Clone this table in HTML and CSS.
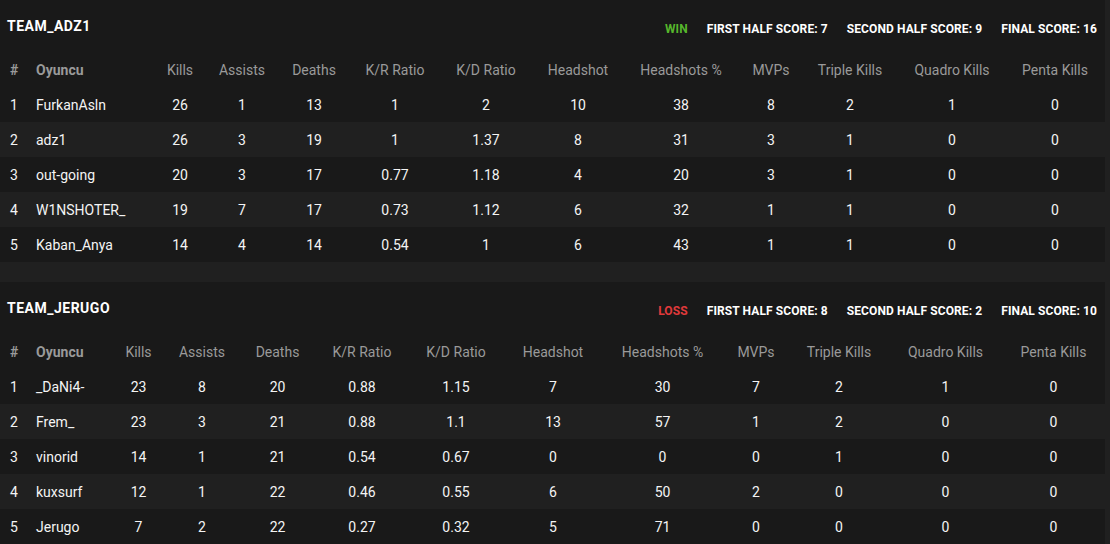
FILE: index.html
```html
<!DOCTYPE html>
<html lang="tr">
<head>
<meta charset="utf-8">
<title>Match Scoreboard</title>
<link rel="stylesheet" href="styles.css">
</head>
<body>
<main class="page">
  <section class="team team-a">
    <header class="team-head">
      <h2 class="team-name">TEAM_ADZ1</h2>
      <ul class="scores">
        <li class="result win">WIN</li>
        <li>FIRST HALF SCORE: 7</li>
        <li>SECOND HALF SCORE: 9</li>
        <li>FINAL SCORE: 16</li>
      </ul>
    </header>
    <table class="stats">
      <colgroup>
        <col class="c-idx"><col class="c-name"><col class="c-kills"><col class="c-assists"><col class="c-deaths"><col class="c-kr"><col class="c-kd"><col class="c-hs"><col class="c-hsp"><col class="c-mvp"><col class="c-triple"><col class="c-quadro"><col class="c-penta">
      </colgroup>
      <thead>
        <tr><th class="idx">#</th><th class="name">Oyuncu</th><th>Kills</th><th>Assists</th><th>Deaths</th><th>K/R Ratio</th><th>K/D Ratio</th><th>Headshot</th><th>Headshots %</th><th>MVPs</th><th>Triple Kills</th><th>Quadro Kills</th><th>Penta Kills</th></tr>
      </thead>
      <tbody>
        <tr><td class="idx">1</td><td class="name">FurkanAsln</td><td>26</td><td>1</td><td>13</td><td>1</td><td>2</td><td>10</td><td>38</td><td>8</td><td>2</td><td>1</td><td>0</td></tr>
        <tr><td class="idx">2</td><td class="name">adz1</td><td>26</td><td>3</td><td>19</td><td>1</td><td>1.37</td><td>8</td><td>31</td><td>3</td><td>1</td><td>0</td><td>0</td></tr>
        <tr><td class="idx">3</td><td class="name">out-going</td><td>20</td><td>3</td><td>17</td><td>0.77</td><td>1.18</td><td>4</td><td>20</td><td>3</td><td>1</td><td>0</td><td>0</td></tr>
        <tr><td class="idx">4</td><td class="name">W1NSHOTER_</td><td>19</td><td>7</td><td>17</td><td>0.73</td><td>1.12</td><td>6</td><td>32</td><td>1</td><td>1</td><td>0</td><td>0</td></tr>
        <tr><td class="idx">5</td><td class="name">Kaban_Anya</td><td>14</td><td>4</td><td>14</td><td>0.54</td><td>1</td><td>6</td><td>43</td><td>1</td><td>1</td><td>0</td><td>0</td></tr>
      </tbody>
    </table>
  </section>

  <section class="team team-b">
    <header class="team-head">
      <h2 class="team-name">TEAM_JERUGO</h2>
      <ul class="scores">
        <li class="result loss">LOSS</li>
        <li>FIRST HALF SCORE: 8</li>
        <li>SECOND HALF SCORE: 2</li>
        <li>FINAL SCORE: 10</li>
      </ul>
    </header>
    <table class="stats">
      <colgroup>
        <col class="c-idx"><col class="c-name"><col class="c-kills"><col class="c-assists"><col class="c-deaths"><col class="c-kr"><col class="c-kd"><col class="c-hs"><col class="c-hsp"><col class="c-mvp"><col class="c-triple"><col class="c-quadro"><col class="c-penta">
      </colgroup>
      <thead>
        <tr><th class="idx">#</th><th class="name">Oyuncu</th><th>Kills</th><th>Assists</th><th>Deaths</th><th>K/R Ratio</th><th>K/D Ratio</th><th>Headshot</th><th>Headshots %</th><th>MVPs</th><th>Triple Kills</th><th>Quadro Kills</th><th>Penta Kills</th></tr>
      </thead>
      <tbody>
        <tr><td class="idx">1</td><td class="name">_DaNi4-</td><td>23</td><td>8</td><td>20</td><td>0.88</td><td>1.15</td><td>7</td><td>30</td><td>7</td><td>2</td><td>1</td><td>0</td></tr>
        <tr><td class="idx">2</td><td class="name">Frem_</td><td>23</td><td>3</td><td>21</td><td>0.88</td><td>1.1</td><td>13</td><td>57</td><td>1</td><td>2</td><td>0</td><td>0</td></tr>
        <tr><td class="idx">3</td><td class="name">vinorid</td><td>14</td><td>1</td><td>21</td><td>0.54</td><td>0.67</td><td>0</td><td>0</td><td>0</td><td>1</td><td>0</td><td>0</td></tr>
        <tr><td class="idx">4</td><td class="name">kuxsurf</td><td>12</td><td>1</td><td>22</td><td>0.46</td><td>0.55</td><td>6</td><td>50</td><td>2</td><td>0</td><td>0</td><td>0</td></tr>
        <tr><td class="idx">5</td><td class="name">Jerugo</td><td>7</td><td>2</td><td>22</td><td>0.27</td><td>0.32</td><td>5</td><td>71</td><td>0</td><td>0</td><td>0</td><td>0</td></tr>
      </tbody>
    </table>
  </section>
</main>
</body>
</html>
```

FILE: styles.css
```css
* { box-sizing: border-box; }

html, body {
  margin: 0;
  padding: 0;
  background: #202020;
  font-family: Roboto, "Liberation Sans", Arial, sans-serif;
  color: #f2f2f2;
}

.page {
  display: flex;
  flex-direction: column;
  gap: 20px;
  width: 1110px;
}

.team {
  width: 1105px;
  background: #191919;
}

.team-head {
  height: 52px;
  display: flex;
  align-items: center;
  justify-content: space-between;
  padding: 0 8px 0 7px;
}

.team-name {
  margin: 0;
  font-size: 14px;
  font-weight: 700;
  color: #ffffff;
  letter-spacing: 0.5px;
}

.scores {
  list-style: none;
  margin: 5px 0 0 0;
  padding: 0;
  display: flex;
  gap: 19px;
  font-size: 12px;
  font-weight: 700;
  color: #ffffff;
  letter-spacing: 0.1px;
}

.result.win { color: #56b62c; }
.result.loss { color: #e0393b; }

.stats {
  width: 1105px;
  border-collapse: collapse;
  table-layout: fixed;
  font-size: 14px;
}

.stats th,
.stats td {
  height: 35px;
  padding: 0;
  text-align: center;
  white-space: nowrap;
}

.stats th {
  font-weight: 400;
  color: #9a9a9a;
}

.stats td {
  color: #f4f4f4;
}

.stats .idx,
.stats .name {
  text-align: left;
  padding-left: 10px;
}

.stats th.idx,
.stats th.name {
  font-weight: 700;
}

.stats tbody tr:nth-child(even) {
  background: #202020;
}

/* column widths: team A */
.team-a .c-idx { width: 26px; }
.team-a .c-name { width: 125px; }
.team-a .c-kills { width: 58px; }
.team-a .c-assists { width: 66px; }
.team-a .c-deaths { width: 78px; }
.team-a .c-kr { width: 84px; }
.team-a .c-kd { width: 98px; }
.team-a .c-hs { width: 86px; }
.team-a .c-hsp { width: 120px; }
.team-a .c-mvp { width: 60px; }
.team-a .c-triple { width: 98px; }
.team-a .c-quadro { width: 106px; }
.team-a .c-penta { width: 100px; }

/* column widths: team B */
.team-b .c-idx { width: 26px; }
.team-b .c-name { width: 86px; }
.team-b .c-kills { width: 53px; }
.team-b .c-assists { width: 74px; }
.team-b .c-deaths { width: 77px; }
.team-b .c-kr { width: 92px; }
.team-b .c-kd { width: 96px; }
.team-b .c-hs { width: 98px; }
.team-b .c-hsp { width: 121px; }
.team-b .c-mvp { width: 66px; }
.team-b .c-triple { width: 100px; }
.team-b .c-quadro { width: 113px; }
.team-b .c-penta { width: 103px; }
```
